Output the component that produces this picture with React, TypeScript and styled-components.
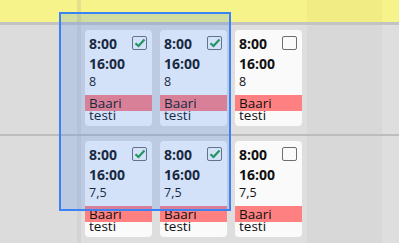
import * as React from 'react';
import styled, { createGlobalStyle } from 'styled-components';

const GlobalStyle = createGlobalStyle`
  html, body {
    margin: 0;
    padding: 0;
    overflow: hidden;
    background: #dddddd;
    font-family: "Open Sans", "Noto Sans", sans-serif;
  }
`;

type Shift = { start: string; end: string; hours: string; place: string; note: string; checked: boolean };

const rows: Shift[][] = [
  [
    { start: '8:00', end: '16:00', hours: '8', place: 'Baari', note: 'testi', checked: true },
    { start: '8:00', end: '16:00', hours: '8', place: 'Baari', note: 'testi', checked: true },
    { start: '8:00', end: '16:00', hours: '8', place: 'Baari', note: 'testi', checked: false },
  ],
  [
    { start: '8:00', end: '16:00', hours: '7,5', place: 'Baari', note: 'testi', checked: true },
    { start: '8:00', end: '16:00', hours: '7,5', place: 'Baari', note: 'testi', checked: true },
    { start: '8:00', end: '16:00', hours: '7,5', place: 'Baari', note: 'testi', checked: false },
  ],
];

const Board = styled.div`
  position: relative;
  width: 399px;
  height: 243px;
  overflow: hidden;
`;

const Grid = styled.div<{ $header?: boolean }>`
  display: grid;
  grid-template-columns: 77px 4px 75px 75px 75.5px 75px 75px;
  height: ${(p) => (p.$header ? '22px' : '109px')};
  border-bottom: ${(p) => (p.$header ? '3px solid #c3c3c3' : '2px solid #bdbdbd')};
`;

const Cell = styled.div<{ $header?: boolean; $dark?: boolean }>`
  background: ${(p) =>
    p.$header ? (p.$dark ? '#f1ed84' : '#f6f38b') : p.$dark ? '#d8d8d8' : '#dedede'};
  padding: 5px 4px 0 4px;
`;

const Label = styled.div<{ $header?: boolean }>`
  background: ${(p) => (p.$header ? '#f6f38b' : '#dcdcdc')};
`;

const Divider = styled.div<{ $header?: boolean }>`
  background: ${(p) => (p.$header ? '#e3e08e' : '#d3d3d3')};
`;

const Card = styled.div`
  position: relative;
  width: 67px;
  height: 96px;
  box-sizing: border-box;
  background: #fafafa;
  border-radius: 4px;
  padding-top: 4px;
  color: #111;
`;

const Time = styled.div`
  font-size: 14px;
  font-weight: 700;
  line-height: 20px;
  padding-left: 4px;
`;

const Hours = styled.div`
  font-size: 12.5px;
  line-height: 16px;
  padding-left: 4px;
`;

const Place = styled.div`
  margin-top: 5px;
  height: 16px;
  background: #ff8080;
  font-size: 13.5px;
  line-height: 16px;
  padding-left: 4px;
`;

const Note = styled.div`
  font-size: 13.5px;
  line-height: 12px;
  margin-top: -2px;
  padding-left: 4px;
`;

const Check = styled.div`
  position: absolute;
  top: 6px;
  right: 5px;
  width: 15px;
  height: 14px;
  box-sizing: border-box;
  border: 1px solid #6e6e6e;
  border-radius: 2px;
  display: flex;
  align-items: center;
  justify-content: center;
`;

const Selection = styled.div`
  position: absolute;
  left: 59px;
  top: 12px;
  width: 172px;
  height: 199px;
  box-sizing: border-box;
  border: 2px solid #3b82f6;
  background: rgba(59, 130, 246, 0.2);
  pointer-events: none;
`;

const ShiftCard = ({ s }: { s: Shift }) => (
  <Card>
    <Check>
      {s.checked && (
        <svg width="12" height="10" viewBox="0 0 12 10">
          <path d="M1.5 5.2 L4.5 8 L10.5 1.5" fill="none" stroke="#1d9a3c" strokeWidth="2.2" />
        </svg>
      )}
    </Check>
    <Time>{s.start}</Time>
    <Time>{s.end}</Time>
    <Hours>{s.hours}</Hours>
    <Place>{s.place}</Place>
    <Note>{s.note}</Note>
  </Card>
);

export default function App() {
  return (
    <Board>
      <GlobalStyle />
      <Grid $header>
        <Label $header />
        <Divider $header />
        <Cell $header />
        <Cell $header />
        <Cell $header />
        <Cell $header $dark />
        <Cell $header />
      </Grid>
      {rows.map((row, i) => (
        <Grid key={i}>
          <Label />
          <Divider />
          {row.map((s, j) => (
            <Cell key={j}>
              <ShiftCard s={s} />
            </Cell>
          ))}
          <Cell $dark />
          <Cell />
        </Grid>
      ))}
      <Selection />
    </Board>
  );
}
